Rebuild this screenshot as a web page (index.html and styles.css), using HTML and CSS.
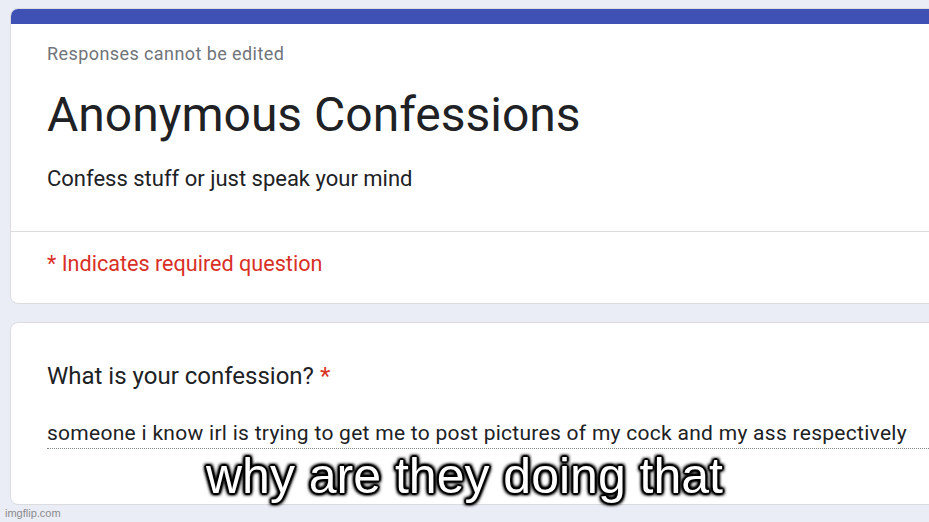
FILE: index.html
```html
<!DOCTYPE html>
<html>
<head>
<meta charset="utf-8">
<link rel="stylesheet" href="styles.css">
</head>
<body>
<div class="page">
  <div class="card header-card">
    <div class="accent"></div>
    <div class="header-body">
      <div class="note">Responses cannot be edited</div>
      <h1 class="title">Anonymous Confessions</h1>
      <div class="desc">Confess stuff or just speak your mind</div>
    </div>
    <div class="divider"></div>
    <div class="required">* Indicates required question</div>
  </div>
  <div class="card question-card">
    <div class="question">What is your confession? <span class="star">*</span></div>
    <div class="answer">someone i know irl is trying to get me to post pictures of my cock and my ass respectively</div>
  </div>
  <div class="caption">why are they doing that</div>
  <div class="watermark">imgflip.com</div>
</div>
</body>
</html>
```
FILE: styles.css
```css
html, body {
  margin: 0;
  padding: 0;
  background: #ebedf6;
  overflow: hidden;
}
.page {
  position: relative;
  width: 929px;
  height: 522px;
  overflow: hidden;
  padding-top: 8px;
  box-sizing: border-box;
  font-family: Roboto, "Liberation Sans", sans-serif;
  color: #202124;
}
.card {
  margin-left: 10px;
  width: 960px;
  background: #fff;
  border: 1px solid #dadce0;
  border-radius: 8px;
  box-sizing: border-box;
}
.header-card {
  height: 296px;
  overflow: hidden;
}
.accent {
  height: 15px;
  background: #3f51b5;
}
.header-body {
  padding: 18px 36px 0;
}
.note {
  font-size: 18px;
  line-height: 24px;
  letter-spacing: 0.42px;
  color: #70757a;
}
.title {
  margin: 21px 0 0;
  font-weight: 400;
  font-size: 48px;
  line-height: 56px;
}
.desc {
  margin-top: 22px;
  font-size: 22px;
  line-height: 28px;
}
.divider {
  margin-top: 38px;
  border-top: 1px solid #dadce0;
}
.required {
  padding: 18px 36px 0;
  font-size: 21.6px;
  line-height: 28px;
  color: #d93025;
}
.question-card {
  margin-top: 18px;
  height: 183px;
  padding: 38px 0 0 36px;
}
.question {
  font-size: 24px;
  line-height: 30px;
}
.star {
  color: #d93025;
}
.answer {
  margin-top: 29px;
  font-size: 21px;
  line-height: 26px;
  letter-spacing: 0.28px;
  padding-bottom: 2px;
  border-bottom: 1px dotted #80868b;
}
.caption {
  position: absolute;
  left: 0;
  right: 0;
  top: 451px;
  text-align: center;
  font-family: "Liberation Sans", Arial, sans-serif;
  font-size: 50px;
  line-height: 50px;
  color: #fff;
  text-shadow:
    1px 1px 0 #000, -1px -1px 0 #000, 1px -1px 0 #000, -1px 1px 0 #000,
    2px 0 1px #000, -2px 0 1px #000, 0 2px 1px #000, 0 -2px 1px #000,
    2px 2px 3px #000, -2px -2px 3px #000, 2px -2px 3px #000, -2px 2px 3px #000,
    0 0 5px #000;
}
.watermark {
  position: absolute;
  left: 5px;
  bottom: 3px;
  font-family: "Liberation Sans", Arial, sans-serif;
  font-size: 11px;
  color: #8a8a8a;
}
```
